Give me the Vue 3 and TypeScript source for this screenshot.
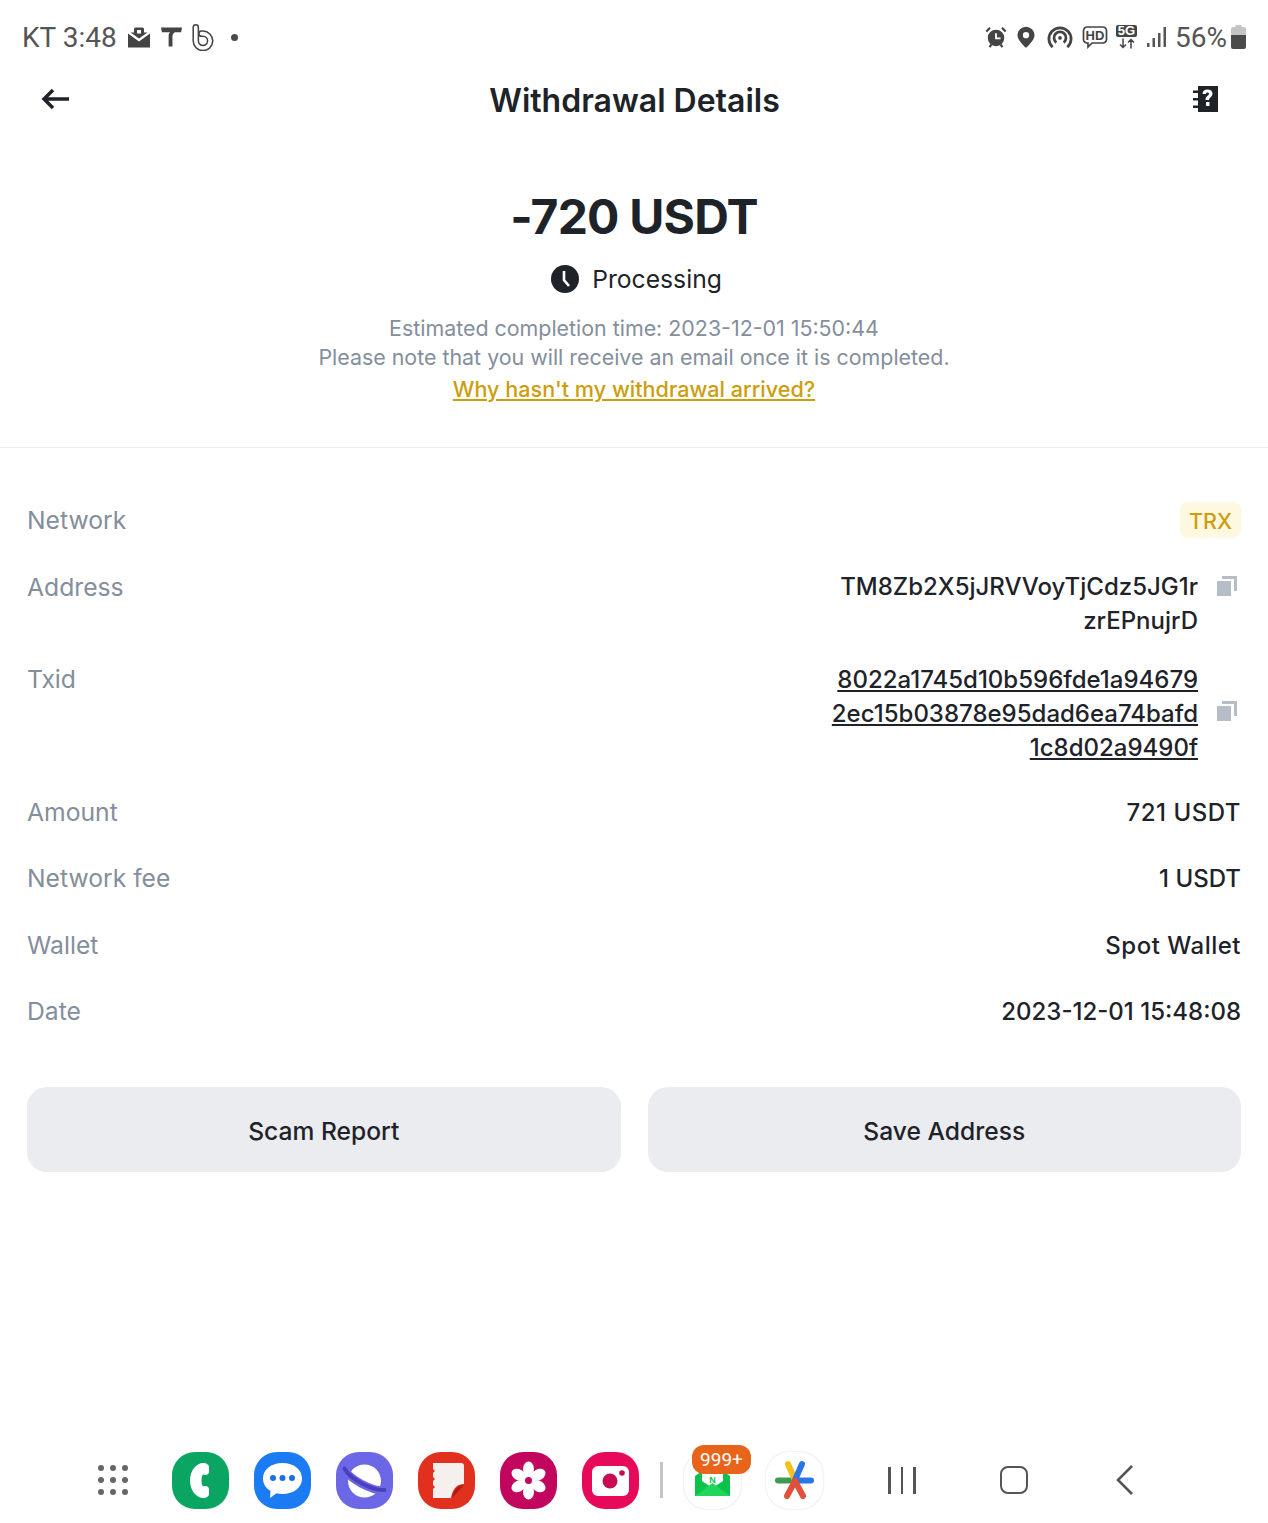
<script setup lang="ts">
interface Row { label: string; value: string[]; kind?: string; copy?: boolean }

const rows: Row[] = [
  { label: 'Network', value: ['TRX'], kind: 'tag' },
  { label: 'Address', value: ['TM8Zb2X5jJRVVoyTjCdz5JG1r', 'zrEPnujrD'], kind: 'addr', copy: true },
  { label: 'Txid', value: ['8022a1745d10b596fde1a94679', '2ec15b03878e95dad6ea74bafd', '1c8d02a9490f'], kind: 'txid', copy: true },
  { label: 'Amount', value: ['721 USDT'], kind: 'wide' },
  { label: 'Network fee', value: ['1 USDT'] },
  { label: 'Wallet', value: ['Spot Wallet'], kind: 'wide' },
  { label: 'Date', value: ['2023-12-01 15:48:08'] },
]
</script>

<template>
  <div class="page">
    <div class="status">
      <div class="st-left">
        <span class="st-text">KT 3:48</span>
        <svg class="ic mailbag" viewBox="0 0 24 24"><path d="M7 7V3.500A1.500 1.500 0 0 1 8.500 2h7A1.500 1.500 0 0 1 17 3.500V7h3.500L12 13 3.500 7z" fill="#444"/><path d="M1 8l11 8 11-8v14H1z" fill="#444"/><path d="M10 4.500h4V8h-4z" fill="#fff"/></svg>
        <svg class="ic tee" viewBox="0 0 24 24"><path d="M1 2h22l-1 5h-6.500c-2 1-2.500 3-2.500 5v10H9V11c0-2 .5-3 1.500-4H2z" fill="#444"/></svg>
        <svg class="ic bee" viewBox="0 0 24 28" fill="none"><path d="M5 4V18A7.500 7.500 0 1 0 12.500 10.500H11" stroke="#444" stroke-width="7" stroke-linecap="round"/><path d="M5 4V18A7.500 7.500 0 1 0 12.500 10.500H11" stroke="#fff" stroke-width="3.800" stroke-linecap="round"/></svg>
        <span class="dot"></span>
      </div>
      <div class="st-right">
        <svg class="ic alarm" viewBox="0 0 24 24"><circle cx="12" cy="13" r="9" fill="#444"/><path d="M1.500 6l4-4M22.500 6l-4-4M5 23l2-3M19 23l-2-3" stroke="#444" stroke-width="2.400"/><path d="M12 8v5.500h5" stroke="#fff" stroke-width="2" fill="none"/></svg>
        <svg class="ic pin" viewBox="0 0 20 24"><path fill-rule="evenodd" d="M10 .5a9.500 9.500 0 0 1 9.500 9.500C19.500 16 10 24 10 24S.5 16 .5 10A9.500 9.500 0 0 1 10 .5zm0 6a3.500 3.500 0 1 0 0 7 3.500 3.500 0 0 0 0-7z" fill="#444"/></svg>
        <svg class="ic cast" viewBox="0 0 28 26" fill="none" stroke="#444" stroke-width="3"><path d="M6 24A12 12 0 1 1 22 24"/><path d="M10 19a6.500 6.500 0 1 1 8 0"/><circle cx="14" cy="14" r="2" fill="#444" stroke="none"/></svg>
        <svg class="ic hd" viewBox="0 0 26 24"><path d="M5 2h16a3.500 3.500 0 0 1 3.500 3.500v9a3.500 3.500 0 0 1-3.500 3.500H10l-4 4v-4H5a3.500 3.500 0 0 1-3.500-3.500v-9A3.500 3.500 0 0 1 5 2z" fill="none" stroke="#444" stroke-width="1.700"/><text x="13" y="15" class="hd-t">HD</text></svg>
        <div class="fiveg">
          <span class="fiveg-t">5G</span>
          <svg viewBox="0 0 20 10" class="arrows"><path d="M6 0v9M3 6l3 3 3-3M14 10V1M11 4l3-3 3 3" stroke="#444" stroke-width="1.500" fill="none"/></svg>
        </div>
        <svg class="ic signal" viewBox="0 0 20 20"><path d="M1 16h2.500v4H1zM6.500 11H9v9H6.500zM12 6h2.500v14H12zM17.500 0H20v20h-2.500z" fill="#555"/></svg>
        <span class="st-text pct">56%</span>
        <svg class="ic batt" viewBox="0 0 15 24"><path d="M4.500 0h6v2H13a2 2 0 0 1 2 2v6H0V4a2 2 0 0 1 2-2h2.500z" fill="#c4c4c4"/><path d="M0 10h15v12a2 2 0 0 1-2 2H2a2 2 0 0 1-2-2z" fill="#4a4a4a"/></svg>
      </div>
    </div>

    <header class="bar">
      <svg class="back" viewBox="0 0 28 24" fill="none" stroke="#1e2329" stroke-width="3.500"><path d="M28 12H3M12 3l-9 9 9 9"/></svg>
      <h1 class="title">Withdrawal Details</h1>
      <svg class="help" viewBox="0 0 26 28"><path fill-rule="evenodd" d="M6 1h20v26H6v-4H1v-2.500h5v-5H1V13h5V8H1V5.500h5zm9.500 3.500c-3.300 0-5 2-5 4.500h3.500c0-1 .500-1.500 1.500-1.500s1.500.6 1.500 1.300c0 1.800-3.500 2.200-3.500 6.200h3.500c0-2.400 3.500-3 3.500-6.300 0-2.700-2-4.200-5-4.200zM14 17v4h3.500v-4z" fill="#1e2329"/></svg>
    </header>

    <section class="hero">
      <div class="amount">-720 USDT</div>
      <div class="state">
        <svg class="clock" viewBox="0 0 28 28"><circle cx="14" cy="14" r="14" fill="#1e2329"/><path d="M13 6v9l5 6" stroke="#fff" stroke-width="2.600" fill="none"/></svg>
        <span>Processing</span>
      </div>
      <p class="note">Estimated completion time: 2023-12-01 15:50:44</p>
      <p class="note">Please note that you will receive an email once it is completed.</p>
      <a class="why">Why hasn't my withdrawal arrived?</a>
    </section>

    <section class="rows">
      <div v-for="r in rows" :key="r.label" class="row" :class="r.kind">
        <span class="label">{{ r.label }}</span>
        <div class="val-wrap">
          <div class="val">
            <div v-for="line in r.value" :key="line">{{ line }}</div>
          </div>
          <svg v-if="r.copy" class="copy" viewBox="0 0 20 20"><path d="M0 5h14v15H0z" fill="#b7bdc6"/><path d="M5 0h15v15h-3V3H5z" fill="#b7bdc6"/></svg>
        </div>
      </div>
    </section>

    <div class="btns">
      <button class="btn">Scam Report</button>
      <button class="btn">Save Address</button>
    </div>

    <footer class="dock">
      <div class="grid9"><span v-for="n in 9" :key="n"></span></div>
      <div class="app phone">
        <svg viewBox="0 0 57 57"><path d="M31 11c-6 0-13 7-13 17.500S25 46 31 46c3 0 6-1.500 6-4v-5c0-2.500-3-3.500-6-2.500-2-2-2-10 0-12 3 1 6 0 6-2.500v-5c0-2.500-3-4-6-4z" fill="#fff"/></svg>
      </div>
      <div class="app msg">
        <svg viewBox="0 0 57 57"><path d="M28.500 11C40 11 48 17.500 48 26.500S40 42 28.500 42c-2 0-4-.2-6-.7L16 46l.5-7C11.500 36 9 31.500 9 26.500 9 17.500 17 11 28.500 11z" fill="#fff"/><circle cx="19" cy="26" r="3" fill="#1a6fe8"/><circle cx="28.500" cy="26" r="3" fill="#1a6fe8"/><circle cx="38" cy="26" r="3" fill="#1a6fe8"/></svg>
      </div>
      <div class="app net">
        <svg viewBox="0 0 57 57" fill="none"><circle cx="28.500" cy="29" r="16.500" fill="#fff"/><path d="M8 17C14 27 36 40 49 38" stroke="#6c67e6" stroke-width="8"/><path d="M8.500 16.500C14 27 36 39 48.500 38" stroke="#4b3fc0" stroke-width="4" stroke-linecap="round"/></svg>
      </div>
      <div class="app notes">
        <svg viewBox="0 0 57 57"><path d="M15 11h28a3 3 0 0 1 3 3v18c-6 0-11 3-13 14H15V37l2-2-2-2v-4l2-2-2-2v-4l2-2-2-2z" fill="#f5f0ee"/><path d="M46 33c-6 0-10 4-12 13z" fill="#a81d14"/></svg>
      </div>
      <div class="app flower">
        <svg viewBox="0 0 57 57">
          <g fill="#fff">
            <ellipse v-for="a in [0, 60, 120, 180, 240, 300]" :key="a" cx="28.500" cy="17" rx="5.500" ry="7.500" :transform="`rotate(${a} 28.500 28.500)`" />
            <circle cx="28.500" cy="28.500" r="7" />
          </g>
          <circle cx="28.500" cy="28.500" r="3.500" fill="#c2065e"/>
        </svg>
      </div>
      <div class="app cam">
        <svg viewBox="0 0 57 57"><rect x="10" y="14" width="37" height="30" rx="6" fill="#fff"/><circle cx="28" cy="29" r="7.500" fill="#c80a55"/><circle cx="40" cy="21" r="2.800" fill="#c80a55"/></svg>
      </div>
      <span class="sep"></span>
      <div class="app light">
        <svg viewBox="0 0 57 57"><path d="M11 24l17.500-12L46 24v20H11z" fill="#0bc24a"/><path d="M18 12h21v17l-10.500 7L18 29z" fill="#fff"/><path d="M11 44l17.500-13L46 44z" fill="#1fd65a"/><text x="28.500" y="31" class="n-t">N</text></svg>
        <span class="badge">999+</span>
      </div>
      <div class="app light">
        <svg viewBox="0 0 57 57" fill="none" stroke-width="6" stroke-linecap="round"><path d="M12 28.500h17" stroke="#3c9b4f"/><path d="M29 28.500h16" stroke="#2a76e8"/><path d="M22 12l7 16" stroke="#f3c11b"/><path d="M36 12l-7 16" stroke="#2a76e8"/><path d="M21 44l8-15" stroke="#e2503c"/><path d="M37 44l-8-15" stroke="#e2503c"/></svg>
      </div>
      <div class="nav">
        <div class="nav-lines"><span></span><span></span><span></span></div>
        <span class="nav-home"></span>
        <svg class="nav-back" viewBox="0 0 18 30" fill="none" stroke="#555" stroke-width="2.600"><path d="M16 1L2 15l14 14"/></svg>
      </div>
    </footer>
  </div>
</template>

<style scoped>
.page {
  height: 1523px;
  display: flex;
  flex-direction: column;
  background: #fff;
  color: #1e2329;
  font-family: Inter, "Noto Sans", sans-serif;
  overflow: hidden;
}
.status {
  height: 72px;
  flex: none;
  display: flex;
  justify-content: space-between;
  align-items: center;
  padding: 2px 22px 0;
  box-sizing: border-box;
}
.st-left, .st-right { display: flex; align-items: center; }
.st-text { font-family: Roboto, sans-serif; font-size: 28px; color: #555; }
.ic { display: block; }
.mailbag { width: 24px; height: 25px; margin-left: 10px; }
.tee { width: 23px; height: 24px; margin-left: 9px; }
.bee { width: 23px; height: 28px; margin-left: 8px; }
.dot { width: 7px; height: 7px; border-radius: 50%; background: #4a4a4a; margin-left: 17px; }
.alarm { width: 22px; height: 22px; }
.pin { width: 18px; height: 22px; margin-left: 10px; }
.cast { width: 26px; height: 24px; margin-left: 12px; }
.hd { width: 26px; height: 24px; margin-left: 9px; }
.hd-t { font-family: "Liberation Sans", sans-serif; font-size: 13px; font-weight: 700; text-anchor: middle; fill: #444; }
.fiveg { width: 21px; margin-left: 8px; display: flex; flex-direction: column; align-items: center; }
.fiveg-t { display: block; width: 21px; height: 12px; font: 700 13px/12px "Liberation Sans", sans-serif; background: #444; color: #fff; text-align: center; border-radius: 2px; }
.arrows { width: 20px; height: 11px; margin-top: 1px; }
.signal { width: 20px; height: 20px; margin-left: 9px; }
.pct { margin-left: 9px; }
.batt { width: 15px; height: 24px; margin-left: 4px; }

.bar {
  height: 56px;
  flex: none;
  display: flex;
  align-items: center;
  justify-content: space-between;
  padding: 0 50px 3px 41px;
}
.back { width: 28px; height: 24px; margin-top: -3px; }
.title { margin: 2px 0 0 8px; font-size: 32px; font-weight: 600; line-height: 40px; }
.help { width: 26px; height: 28px; margin-top: -3px; }

.hero {
  flex: none;
  display: flex;
  flex-direction: column;
  align-items: center;
  border-bottom: 1px solid #eaecef;
  height: 317px;
  padding-top: 54px;
  box-sizing: border-box;
}
.amount { font-size: 48px; font-weight: 700; line-height: 64px; letter-spacing: -0.800px; }
.state { display: flex; align-items: center; gap: 13px; font-size: 24.700px; line-height: 34px; margin-top: 13px; margin-bottom: 18px; margin-left: 5px; }
.clock { width: 28px; height: 28px; }
.note { margin: 0; color: #848e9c; font-size: 21.400px; line-height: 29px; }
.why { margin-top: 2px; color: #cc9e0c; font-size: 21.600px; font-weight: 500; line-height: 30px; text-decoration: underline; }

.rows { flex: none; padding: 55px 27px 0; }
.row { display: flex; justify-content: space-between; align-items: flex-start; padding-bottom: 32.500px; font-size: 24.700px; line-height: 34px; }
.label { color: #848e9c; }
.val-wrap { display: flex; align-items: center; margin: 1px 0 -1px; }
.val { text-align: right; font-weight: 500; font-size: 24px; }
.wide .val { letter-spacing: 0.500px; }
.addr { padding-bottom: 24px; }
.txid { padding-bottom: 31px; }
.addr .val, .txid .val { margin-right: 19px; }
.addr .val-wrap { margin: 0; }
.txid .val { text-decoration: underline; }
.copy { width: 20px; height: 20px; margin-right: 4px; }
.addr .val-wrap { align-items: flex-start; }
.addr .copy { margin-top: 6px; }
.txid .copy { margin-top: -6px; }
.tag .val-wrap { margin: 0; }
.tag .val {
  background: #fef8e0;
  color: #cc9e0c;
  border-radius: 8px;
  font-size: 21.500px;
  height: 36px;
  line-height: 38px;
  padding: 0 9px;
  margin: -1px 0;
}

.btns { flex: none; display: grid; grid-template-columns: 1fr 1fr; gap: 27px; padding: 26px 27px 0; }
.btn {
  height: 85px;
  border: 0;
  padding: 3px 0 0;
  border-radius: 20px;
  background: #eaecef;
  color: #1e2329;
  font-family: inherit;
  font-size: 24.600px;
  font-weight: 500;
}

.dock {
  margin-top: auto;
  height: 86px;
  flex: none;
  display: flex;
  align-items: center;
  padding: 0 0 0 98px;
  box-sizing: border-box;
}
.grid9 { width: 30px; display: grid; grid-template-columns: repeat(3, 6px); gap: 6px; margin-right: 44px; }
.grid9 span { width: 6px; height: 6px; border-radius: 50%; background: #666; }
.app { width: 57px; height: 57px; border-radius: 23px; margin-right: 25px; position: relative; flex: none; }
.app svg { display: block; width: 57px; height: 57px; }
.phone { background: #0aa563; }
.msg { background: #1a7bf2; }
.net { background: #6c67e6; }
.notes { background: #e2301f; }
.flower { background: #c2065e; }
.cam { background: #e80a5a; }
.light { background: #fff; box-shadow: 0 0 2px rgba(0, 0, 0, 0.18); }
.n-t { font: 700 9px "Liberation Sans", sans-serif; text-anchor: middle; fill: #0bc24a; }
.sep { width: 3px; height: 36px; background: #c4c4c4; margin-right: 21px; margin-left: -4px; }
.badge {
  position: absolute;
  top: -7px;
  left: 8px;
  width: 59px;
  height: 29px;
  border-radius: 12px;
  background: #e8641b;
  color: #fff;
  font: 19px/29px Roboto, sans-serif;
  text-align: center;
}
.nav { display: flex; align-items: center; margin-left: 40px; }
.nav-lines { display: flex; gap: 10px; }
.nav-lines span { width: 2.500px; height: 27px; background: #555; }
.nav-home { width: 28px; height: 28px; border: 2.500px solid #555; border-radius: 8px; margin-left: 84px; box-sizing: border-box; }
.nav-back { width: 18px; height: 30px; margin-left: 88px; }
</style>

<style>
html, body { margin: 0; background: #fff; }
</style>
